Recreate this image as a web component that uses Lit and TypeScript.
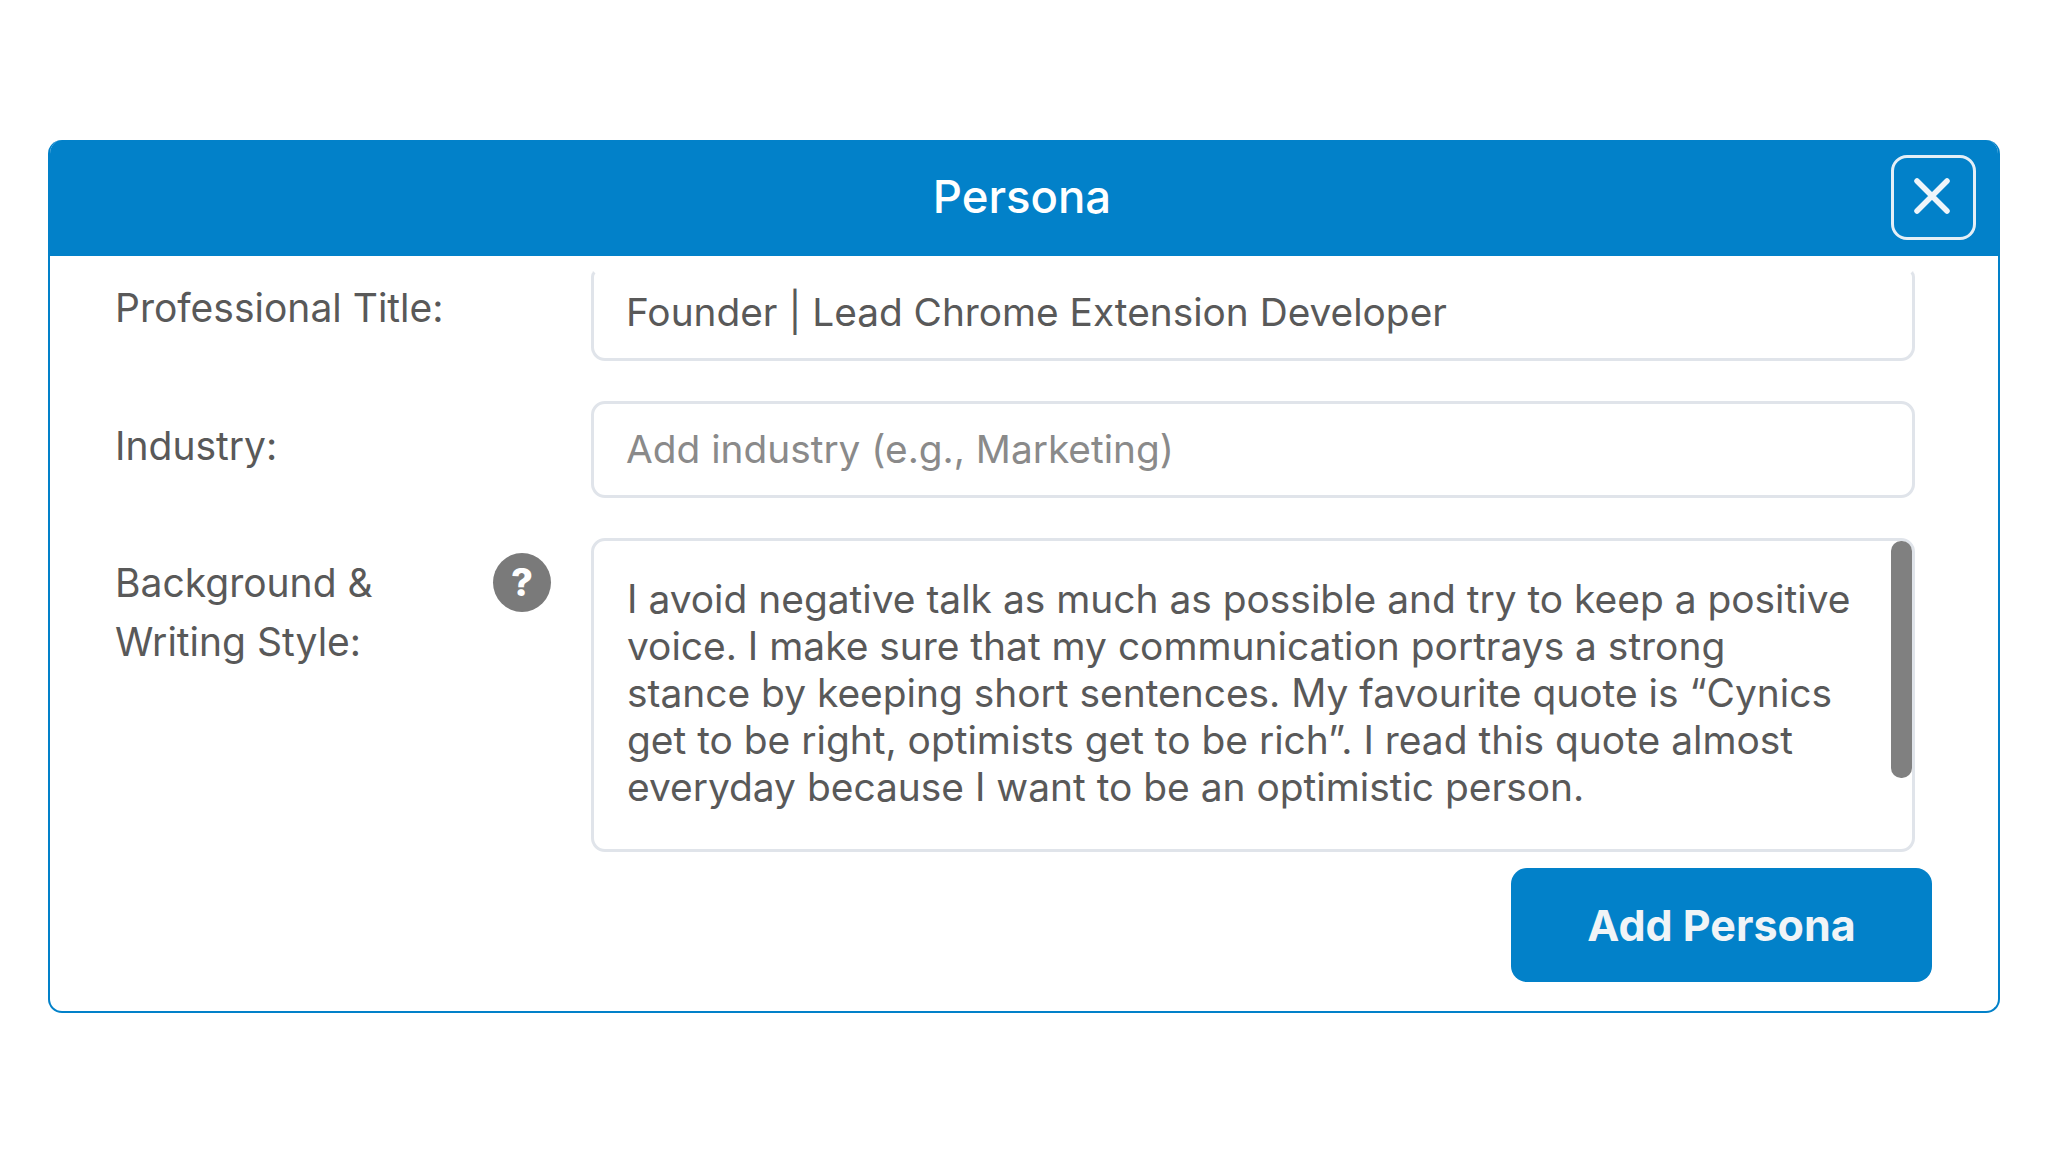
import { LitElement, html, css } from "lit";
import { customElement } from "lit/decorators.js";

const BIO = `I avoid negative talk as much as possible and try to keep a positive
voice. I make sure that my communication portrays a strong
stance by keeping short sentences. My favourite quote is “Cynics
get to be right, optimists get to be rich”. I read this quote almost
everyday because I want to be an optimistic person.`;

@customElement("app-root")
export class AppRoot extends LitElement {
  static styles = css`
    :host {
      display: block;
      box-sizing: border-box;
      width: 2048px;
      height: 1152px;
      padding: 140px 48px 0;
      background: #fff;
      font-family: Inter, "Liberation Sans", sans-serif;
      color: #555;
    }
    * { box-sizing: border-box; }
    .card {
      height: 873px;
      border: 2px solid #0281c9;
      border-top: none;
      border-radius: 14px;
      background: #fff;
      overflow: hidden;
    }
    .head {
      height: 116px;
      margin: 0 -2px;
      background: #0281c9;
      display: grid;
      grid-template-columns: 1fr auto;
      align-items: center;
      position: relative;
      padding-right: 24px;
    }
    h1 {
      margin: -3px 0 0;
      position: absolute;
      left: 0;
      right: 4px;
      text-align: center;
      font-size: 45.5px;
      font-weight: 500;
      color: #fff;
    }
    .close {
      grid-column: 2;
      width: 85px;
      height: 85px;
      margin-top: -2px;
      border: 3px solid #e4eff7;
      border-radius: 16px;
      background: none;
      padding: 0 3px 2px 0;
      display: flex;
      align-items: center;
      justify-content: center;
    }
    .body {
      display: flex;
      flex-direction: column;
      padding: 13px 83px 0 65px;
    }
    .row {
      display: grid;
      grid-template-columns: 476px 1fr;
      margin-bottom: 40px;
    }
    .row.last { margin-bottom: 16px; }
    .label {
      font-size: 39px;
      line-height: 59px;
      padding-top: 9px;
      color: #595959;
    }
    .label.second { padding-top: 15px; }
    .bg-label {
      display: flex;
      justify-content: space-between;
      padding-top: 15px;
      padding-right: 40px;
    }
    .help {
      width: 58px;
      height: 59px;
      border-radius: 50%;
      background: #7a7a7a;
      color: #fff;
      font-size: 38px;
      font-weight: 800;
      line-height: 59px;
      text-align: center;
    }
    input, textarea {
      display: block;
      width: 100%;
      border: 3px solid #e0e4ea;
      border-radius: 14px;
      background: #fff;
      outline: none;
      font: inherit;
      font-size: 38.8px;
      color: #595959;
      resize: none;
      overflow: hidden;
    }
    input { padding: 0 32px 2px 32px; height: 97px; }
    input::placeholder { color: #8a8a8a; opacity: 1; }
    input.cut {
      height: 92px;
      border-top-color: transparent;
      border-top-left-radius: 8px;
      border-top-right-radius: 8px;
      padding-bottom: 8px;
    }
    .ta { position: relative; height: 314px; }
    textarea {
      height: 100%;
      padding: 34px 0 0 33px;
      font-size: 38.9px;
      line-height: 47px;
      white-space: pre;
    }
    .thumb {
      position: absolute;
      top: 3px;
      right: 3px;
      width: 21px;
      height: 237px;
      border-radius: 10px;
      background: #808080;
    }
    .foot { display: flex; justify-content: flex-end; margin-right: -17px; }
    .btn {
      width: 421px;
      height: 114px;
      border: none;
      border-radius: 16px;
      background: #0281c9;
      color: #f0f4f7;
      font: inherit;
      font-size: 43px;
      font-weight: 700;
    }
  `;

  render() {
    return html`
      <div class="card">
        <header class="head">
          <h1>Persona</h1>
          <button class="close" aria-label="Close">
            <svg width="36" height="36" viewBox="0 0 36 36">
              <path d="M3 3 L33 33 M33 3 L3 33" stroke="#eef5fa" stroke-width="5.5" stroke-linecap="round" fill="none"></path>
            </svg>
          </button>
        </header>
        <div class="body">
          <div class="row">
            <div class="label">Professional Title:</div>
            <input class="cut" .value=${"Founder | Lead Chrome Extension Developer"} />
          </div>
          <div class="row">
            <div class="label second">Industry:</div>
            <input placeholder="Add industry (e.g., Marketing)" />
          </div>
          <div class="row last">
            <div class="label bg-label">
              <span>Background &<br />Writing Style:</span>
              <span class="help">?</span>
            </div>
            <div class="ta">
              <textarea .value=${BIO}></textarea>
              <div class="thumb"></div>
            </div>
          </div>
          <div class="foot"><button class="btn">Add Persona</button></div>
        </div>
      </div>
    `;
  }
}
